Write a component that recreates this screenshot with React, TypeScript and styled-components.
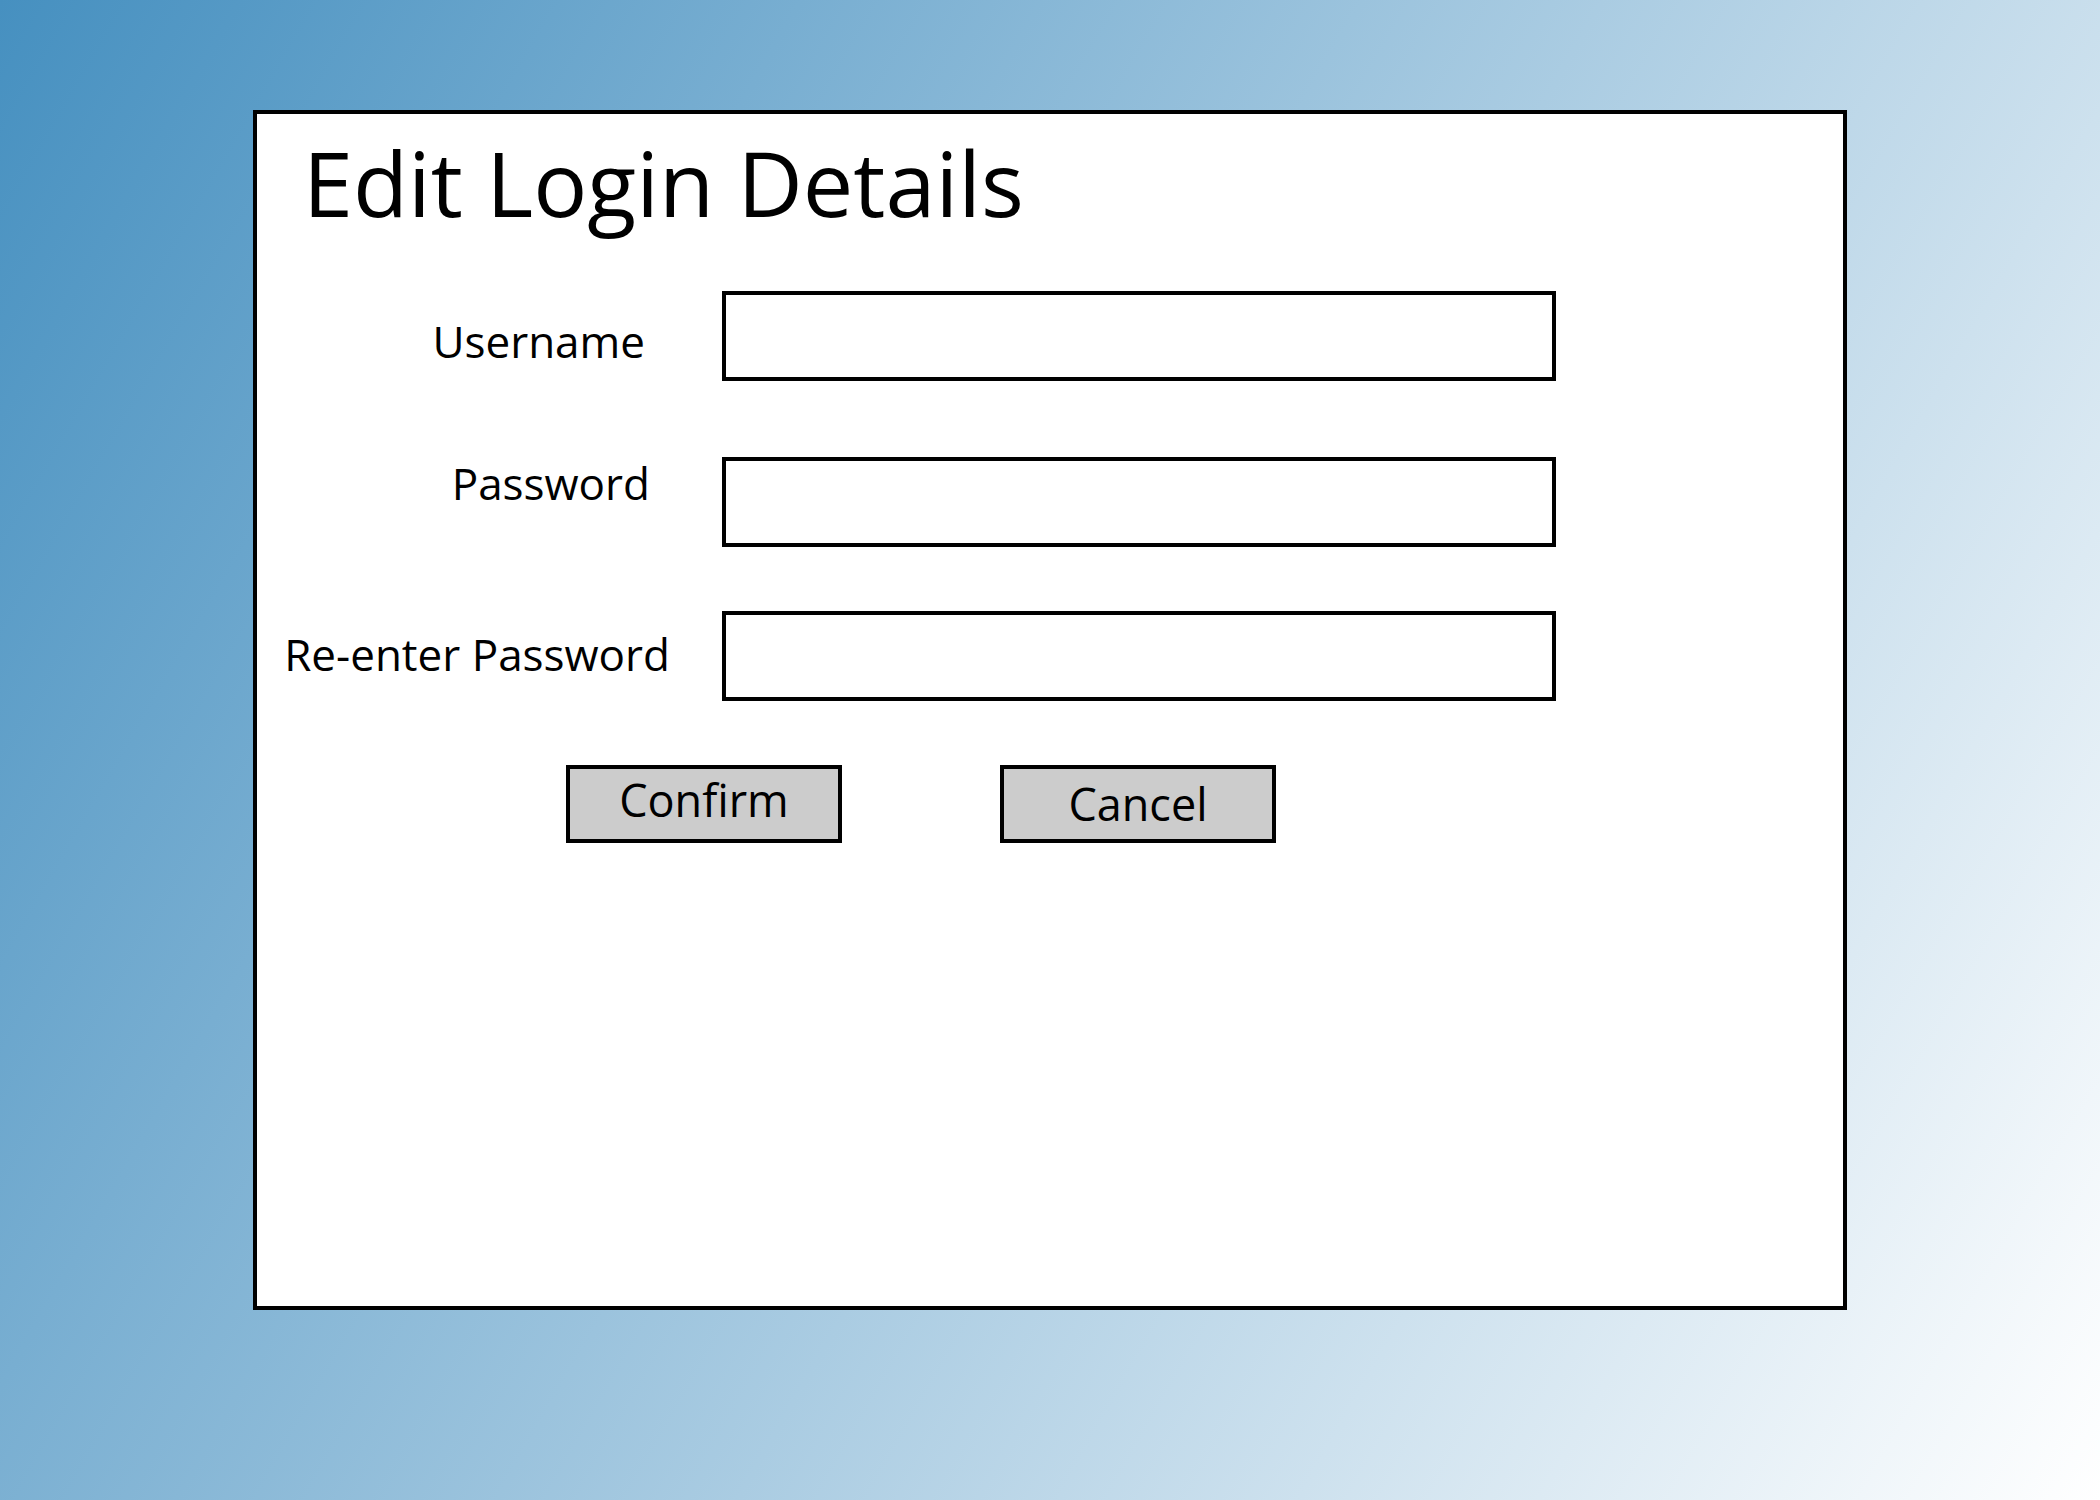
import styled, { createGlobalStyle } from "styled-components"

const Global = createGlobalStyle`
  html, body {
    margin: 0;
    padding: 0;
  }
  body {
    font-family: "Open Sans", "Liberation Sans", sans-serif;
    color: #000;
  }
`

type Field = {
  label: string
  type: string
  pad: number
  top: number
  after: number
}

const fields: Field[] = [
  { label: "Username", type: "text", pad: 25, top: 28, after: 76 },
  { label: "Password", type: "password", pad: 20, top: 4, after: 64 },
  { label: "Re-enter Password", type: "password", pad: 0, top: 21, after: 64 },
]

const App = () => {
  return (
    <>
      <Global />
      <Page>
        <Panel>
          <Title>Edit Login Details</Title>
          <Form onSubmit={(e) => e.preventDefault()}>
            {fields.map((f) => (
              <Row key={f.label} $after={f.after}>
                <Label $pad={f.pad} $top={f.top}>
                  {f.label}
                </Label>
                <Input type={f.type} />
              </Row>
            ))}
            <Buttons>
              <Button type="submit" $lift={5}>
                Confirm
              </Button>
              <Button type="button" $lift={1}>
                Cancel
              </Button>
            </Buttons>
          </Form>
        </Panel>
      </Page>
    </>
  )
}

export default App

const Page = styled.div`
  width: 100%;
  min-height: 100vh;
  box-sizing: border-box;
  padding: 110px 0 0 253px;
  background: linear-gradient(120deg, #4690c0 0%, #ffffff 100%);
`

const Panel = styled.div`
  width: 1594px;
  height: 1200px;
  box-sizing: border-box;
  border: 4px solid #000;
  background-color: #fff;
  display: flex;
  flex-direction: column;
`

const Title = styled.h1`
  margin: 23px 0 0 46px;
  font-size: 90px;
  font-weight: 400;
  line-height: 1;
`

const Form = styled.form`
  margin-top: 64px;
  display: flex;
  flex-direction: column;
`

const Row = styled.div<{ $after: number }>`
  display: flex;
  align-items: flex-start;
  gap: 52px;
  height: 90px;
  margin-bottom: ${({ $after }) => $after}px;
`

const Label = styled.label<{ $pad: number; $top: number }>`
  width: 413px;
  box-sizing: border-box;
  text-align: right;
  padding-right: ${({ $pad }) => $pad}px;
  margin-top: ${({ $top }) => $top}px;
  font-size: 44px;
  line-height: 1;
  white-space: nowrap;
`

const Input = styled.input`
  width: 834px;
  height: 90px;
  box-sizing: border-box;
  border: 4px solid #000;
  border-radius: 0;
  background: #fff;
  outline: 0;
  padding: 0 16px;
  font-family: inherit;
  font-size: 40px;
`

const Buttons = styled.div`
  display: flex;
  gap: 158px;
  padding-left: 309px;
`

const Button = styled.button<{ $lift: number }>`
  width: 276px;
  height: 78px;
  box-sizing: border-box;
  border: 4px solid #000;
  border-radius: 0;
  background-color: #cccccc;
  display: flex;
  align-items: center;
  justify-content: center;
  padding: 0 0 ${({ $lift }) => $lift * 2}px;
  font-family: "Open Sans", "Liberation Sans", sans-serif;
  font-size: 45px;
  line-height: 1;
  color: #000;
  cursor: pointer;
`
